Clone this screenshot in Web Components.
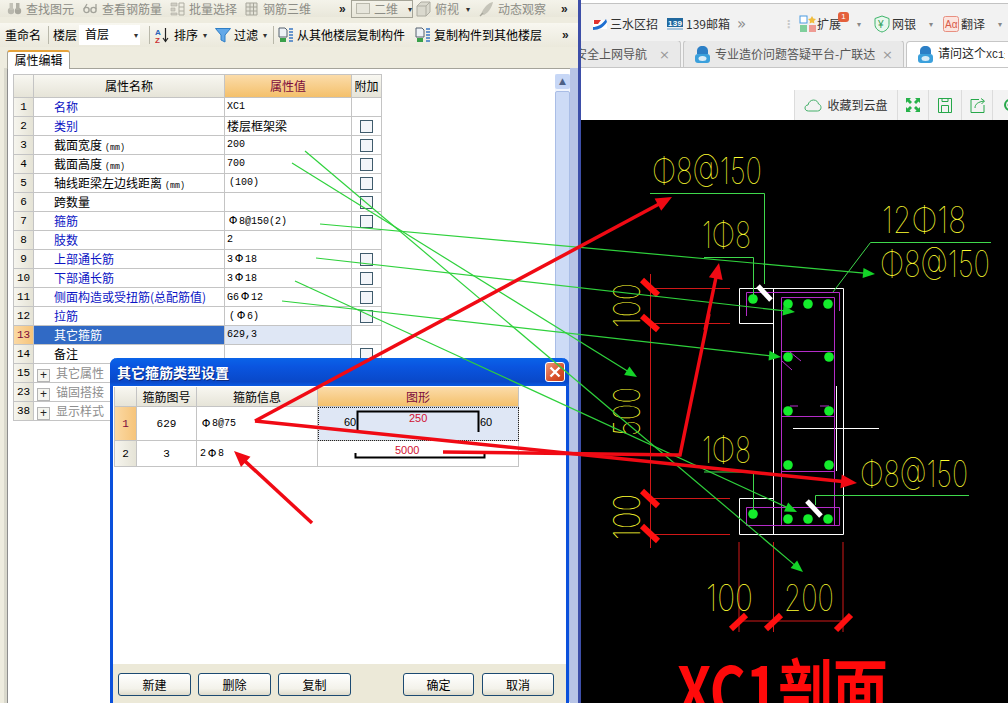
<!DOCTYPE html>
<html lang="zh">
<head>
<meta charset="utf-8">
<title>XC1</title>
<style>
html, body { margin: 0; padding: 0; width: 1008px; height: 703px; overflow: hidden; background: #fff; }
body { font: 12px/16px "Noto Sans CJK SC", "Liberation Sans", sans-serif; color: #000; }
</style>
</head>
<body>
<app-shell></app-shell>

<script>
const UI_FONT = '"Noto Sans CJK SC", "Liberation Sans", sans-serif';
const NUM_FONT = '"Liberation Mono", "Noto Sans CJK SC", monospace';

class AppShell extends HTMLElement {
    constructor() {
        super();
        this.attachShadow({ mode: "open" });
    }

    connectedCallback() {
        this.shadowRoot.innerHTML = `
        <style>
            :host { display: flex; position: relative; width: 1008px; height: 703px; overflow: hidden; }
            .divider { width: 3px; flex: none; background: #3d4ea8; }
            modeler-panel { flex: none; width: 578px; }
            browser-pane { flex: 1; min-width: 0; }
            markup-overlay { position: absolute; left: 0; top: 0; }
        </style>
        <modeler-panel></modeler-panel>
        <div class="divider"></div>
        <browser-pane></browser-pane>
        <markup-overlay></markup-overlay>
        `;
    }
}

/* left side: the rebar program */
class ModelerPanel extends HTMLElement {
    constructor() {
        super();
        this.attachShadow({ mode: "open" });
    }

    connectedCallback() {
        this.shadowRoot.innerHTML = `
        <style>
            :host { display: flex; flex-direction: column; position: relative; height: 703px; background: #eeecdf; overflow: hidden; font: 12px/16px ${UI_FONT}; }
            .bar { display: flex; align-items: center; flex: none; white-space: nowrap; }
            .top { height: 17px; background: linear-gradient(#f4f3ea, #e9e7da); color: #8d8d86; }
            .second { height: 24px; margin-top: 6px; background: linear-gradient(#f8f7f0, #ebe9dc); }
            .sep { width: 1px; height: 18px; background: #b9b8aa; flex: none; }
            .more { font: bold 12px/10px "Liberation Sans", sans-serif; color: #222; flex: none; width: 8px; }
            svg { flex: none; display: block; }
            .view { display: flex; align-items: center; width: 62px; height: 18px; box-sizing: border-box; border: 1px solid #a5a497; padding-left: 4px; gap: 4px; flex: none; }
            .select { width: 61px; height: 20px; background: #fff; padding-left: 6px; box-sizing: border-box; line-height: 18px; flex: none; position: relative; }
            .caret { font-size: 8px; color: #333; width: 8px; flex: none; text-align: center; }
            .tabs { flex: none; height: 18px; display: flex; margin: 3px 0 0 7px; }
            .tab { width: 63px; height: 19px; box-sizing: border-box; background: #fff; border: 1px solid #a4a39a; border-top: 2px solid #e6a33b; border-bottom: none; border-radius: 3px 3px 0 0; text-align: center; line-height: 16px; position: relative; z-index: 1; }
            .pane { flex: 1; display: flex; margin: 0 0 0 7px; background: #fff; border-top: 1px solid #a4a39a; border-left: 1px solid #8d8d8d; box-shadow: -3px 0 0 #d9d8cc; padding: 5px 0 0 5px; min-height: 0; }
            prop-grid { flex: none; }
            .scroll { margin-left: auto; width: 15px; display: flex; flex-direction: column; gap: 2px; background: #f1f5fd; }
            .scroll i { display: block; height: 15px; border-radius: 2px; background: #c7d7f6; color: #4d6185; font: 9px/15px "DejaVu Sans", sans-serif; text-align: center; font-style: normal; }
            .scroll b { display: block; flex: 1; background: #cddbf6; border: 1px solid #a9bde6; border-radius: 2px; box-sizing: border-box; }
            .edge { width: 8px; margin-top: -6px; background: #b8c4e6; flex: none; }
            stirrup-dialog { position: absolute; left: 110px; top: 358px; }
        </style>

        <div class="bar top">
            <tool-item icon="find" style="margin-left:7px">查找图元</tool-item>
            <tool-item icon="glasses" style="margin-left:9px">查看钢筋量</tool-item>
            <tool-item icon="batch" style="margin-left:8px">批量选择</tool-item>
            <tool-item icon="cube3" style="margin-left:7px">钢筋三维</tool-item>
            <span class="more" style="margin:0 4px 0 28px">»</span>
            <span class="view" style="margin-left:0"><svg width="14" height="11"><rect x=".5" y=".5" width="13" height="10" fill="#e7e6dc" stroke="#bab9ad"/></svg>二维<span class="caret" style="margin-left:4px">▾</span></span>
            <tool-item icon="box" style="margin-left:3px">俯视</tool-item>
            <span class="caret" style="margin:0 7px 0 5px">▾</span>
            <tool-item icon="orbit">动态观察</tool-item>
            <span class="more" style="margin-left:15px">»</span>
        </div>

        <div class="bar second">
            <span style="margin-left:5px;width:43px">重命名</span>
            <div class="sep"></div>
            <span style="margin-left:4px;width:26px">楼层</span>
            <span class="select">首层<span class="caret" style="position:absolute;right:0;top:1px">▾</span></span>
            <div class="sep" style="margin-left:9px"></div>
            <tool-item icon="sort" style="margin-left:5px">排序</tool-item>
            <span class="caret" style="margin:0 6px 0 3px">▾</span>
            <tool-item icon="funnel">过滤</tool-item>
            <span class="caret" style="margin:0 4px 0 3px">▾</span>
            <div class="sep"></div>
            <tool-item icon="copy" style="margin-left:4px">从其他楼层复制构件</tool-item>
            <tool-item icon="copy" style="margin-left:10px">复制构件到其他楼层</tool-item>
            <span class="more" style="margin-left:auto;margin-right:8px">»</span>
        </div>

        <div class="tabs"><div class="tab">属性编辑</div></div>
        <div class="pane">
            <prop-grid></prop-grid>
            <div class="scroll"><i>▲</i><b></b></div>
            <div class="edge"></div>
        </div>
        <stirrup-dialog></stirrup-dialog>
        `;
    }
}

class ToolItem extends HTMLElement {
    constructor() {
        super();
        this.attachShadow({ mode: "open" });
    }

    static ICONS = {
        find: `<circle cx="4" cy="10" r="3.2" fill="#b9b8ae"/><circle cx="11" cy="10" r="3.2" fill="#a8a79d"/><rect x="2.5" y="2" width="3.5" height="7" fill="#c4c3b8"/><rect x="9" y="2" width="3.5" height="7" fill="#b2b1a6"/>`,
        glasses: `<circle cx="3.5" cy="9" r="2.6" fill="none" stroke="#a3a39a" stroke-width="1.4"/><circle cx="10.5" cy="9" r="2.6" fill="none" stroke="#a3a39a" stroke-width="1.4"/><path d="M1 8 4 3M13 8V3" stroke="#a3a39a" stroke-width="1.3" fill="none"/>`,
        batch: `<path d="M1 2h6v3H1zM1 7h4v3H1zM1 12h6v2H1z" fill="#cfcec3" stroke="#aeada2" stroke-width=".6"/><path d="M9 2h5M9 6h5M9 10h5M9 14h5M9 2v12M14 2v12" stroke="#aeada2" fill="none"/>`,
        cube3: `<path d="M2 2h11v12H2zM2 6h11M2 10h11M6 2v12M9.5 2v12" stroke="#a7a69b" fill="#e4e3d8"/>`,
        box: `<path d="M1 5 5 1h9v10l-4 4H1zM1 5h9v10M10 5l4-4" fill="#dad9ce" stroke="#aeada2"/>`,
        orbit: `<path d="M2 13C5 6 9 2 14 1c-1 5-4 10-9 13z" fill="#c5c4b9"/><path d="M1 15 4 12" stroke="#a7a69b" stroke-width="1.5"/>`,
        sort: `<text x="0" y="7.5" font-family="Liberation Sans" font-size="8" font-weight="bold" fill="#2b62b8">A</text><text x="0" y="15.5" font-family="Liberation Sans" font-size="8" font-weight="bold" fill="#c33">Z</text><path d="M10.5 1v13M8 11l2.5 3.5L13 11" stroke="#222" fill="none" stroke-width="1.2"/>`,
        funnel: `<path d="M.5 1.5h15L10 8v7l-4-2V8z" fill="#62a8e8" stroke="#2f7fc6"/>`,
        copy: `<path d="M1 1h6l2 2v7H1z" fill="#eef2f6" stroke="#55606e"/><path d="M2 11h6v4H2z" fill="#39a04a"/><path d="M11 2h4M11 5h4M11 8h4M11 11h4M11 14h4" stroke="#3b78c4" stroke-width="1.6"/>`,
    };

    connectedCallback() {
        const icon = ToolItem.ICONS[this.getAttribute("icon")] || "";
        this.shadowRoot.innerHTML = `
        <style>
            :host { display: inline-flex; align-items: center; gap: 3px; flex: none; }
            svg { display: block; flex: none; }
        </style>
        <svg width="16" height="16" viewBox="0 0 16 16">${icon}</svg><slot></slot>
        `;
    }
}

// rebar symbol keeps a full cell width in the narrow value font
const rebar = (s) => s.replace(/Φ/g, '<span class="phi">Φ</span>');

class PropGrid extends HTMLElement {
    constructor() {
        super();
        this.attachShadow({ mode: "open" });
    }

    get rows() {
        return [
            ["1", "名称", "XC1", "link", false],
            ["2", "类别", "楼层框架梁", "link", true],
            ["3", "截面宽度<small>(mm)</small>", "200", "", true],
            ["4", "截面高度<small>(mm)</small>", "700", "", true],
            ["5", "轴线距梁左边线距离<small>(mm)</small>", "(100)", "", true],
            ["6", "跨数量", "", "", true],
            ["7", "箍筋", "Φ8@150(2)", "link", true],
            ["8", "肢数", "2", "link", false],
            ["9", "上部通长筋", "3Φ18", "link", true],
            ["10", "下部通长筋", "3Φ18", "link", true],
            ["11", "侧面构造或受扭筋(总配筋值)", "G6Φ12", "link", true],
            ["12", "拉筋", "(Φ6)", "link", true],
            ["13", "其它箍筋", "629,3", "sel", false],
            ["14", "备注", "", "", true],
            ["15", "其它属性", null, "group", false],
            ["23", "锚固搭接", null, "group", false],
            ["38", "显示样式", null, "group", false],
        ];
    }

    connectedCallback() {
        const cells = this.rows.map(([n, name, value, kind, check]) => {
            const idxClass = kind === "sel" ? "idx on" : "idx";
            const plus = kind === "group" ? `<span class="plus">+</span>` : "";
            let third = "";
            if (value !== null) {
                let cls = kind === "sel" ? "val selval" : "val";
                if (/[\u4e00-\u9fff]/.test(value)) cls += " cjk";
                if (value[0] === "(") cls += " pad";
                third = `<div class="${cls}">${rebar(value)}</div>
                <div class="add">${check ? `<span class="box"></span>` : ""}</div>`;
            }
            return `<div class="${idxClass}">${n}</div>
                <div class="name ${kind}" ${value === null ? 'style="grid-column: 2 / 5"' : ""}>${plus}${name}</div>${third}`;
        }).join("");

        this.shadowRoot.innerHTML = `
        <style>
            :host { display: block; width: 369px; font: 12px/18px ${UI_FONT}; }
            .grid { display: grid; grid-template-columns: 20px 191px 127px 30px; grid-template-rows: 23px repeat(17, 19px); border-top: 1px solid #c4c4c4; border-left: 1px solid #c4c4c4; }
            .grid > div { border-right: 1px solid #c4c4c4; border-bottom: 1px solid #c4c4c4; box-sizing: border-box; white-space: nowrap; overflow: hidden; }
            .head { background: linear-gradient(#f8f7f1, #e6e4d8); text-align: center; line-height: 22px; }
            .head.val-h { background: linear-gradient(#fbdcaa, #f4c06b); color: #7c0b3c; }
            .idx { background: linear-gradient(90deg, #f6f5ee, #e5e3d6); text-align: center; font: 11px/18px ${NUM_FONT}; }
            .idx.on { background: linear-gradient(90deg, #fbd9a4, #f6c47a); color: #7c0b3c; }
            .name { padding-left: 20px; }
            .name small { font: 8.3px/18px ${NUM_FONT}; margin-left: 3px; }
            .name.link { color: #0b14c4; }
            .name.sel { background: #316ac5; color: #fff; }
            .name.group { color: #8d8d8d; padding-left: 3px; }
            .plus { display: inline-block; width: 11px; height: 11px; margin-right: 6px; border: 1px solid #b4b4b4; background: #f5f5f0; color: #222; font: 12px/10px "Liberation Sans", sans-serif; text-align: center; vertical-align: -1px; }
            .val { padding-left: 2px; font: 10px/18px ${NUM_FONT}; }
            .val.cjk { font: 12px/18px ${UI_FONT}; }
            .val.pad { padding-left: 4px; }
            .phi { display: inline-block; width: 12px; text-align: center; font: 11px/18px "DejaVu Sans", sans-serif; }
            .selval { background: #dfe7f5; }
            .add { display: flex; align-items: center; justify-content: center; }
            .box { width: 11px; height: 11px; border: 1px solid #3f5b6c; background: #f3f5f9; display: block; }
        </style>
        <div class="grid">
            <div class="head"></div>
            <div class="head">属性名称</div>
            <div class="head val-h">属性值</div>
            <div class="head">附加</div>
            ${cells}
        </div>
        `;
    }
}

class StirrupDialog extends HTMLElement {
    constructor() {
        super();
        this.attachShadow({ mode: "open" });
    }

    connectedCallback() {
        this.shadowRoot.innerHTML = `
        <style>
            :host { display: flex; flex-direction: column; width: 459px; height: 350px; box-sizing: border-box; border: 3px solid #0a50dc; border-top: none; border-radius: 7px 7px 0 0; background: #fff; font: 12px/16px ${UI_FONT}; }
            .title { flex: none; height: 28px; margin: 0 -3px; padding: 0 4px 0 7px; border-radius: 7px 7px 0 0; display: flex; align-items: center; justify-content: space-between; background: linear-gradient(#0a63e8, #0a55e0 30%, #0948c8 85%, #0a5ae2); color: #fff; font: bold 14px/16px ${UI_FONT}; text-shadow: 1px 1px 0 #0a2a80; }
            .close { width: 20px; height: 20px; box-sizing: border-box; border: 1px solid #fff; border-radius: 3px; background: linear-gradient(135deg, #ee9a7c, #d9502a 60%, #c23d18); }
            .close svg { display: block; }
            .table { flex: none; margin: 1px 0 0 1px; display: grid; grid-template-columns: 22px 60px 121px 201px; grid-template-rows: 20px 34px 26px; width: 405px; border-left: 1px solid #c4c4c4; }
            .table > div { border-right: 1px solid #c4c4c4; border-bottom: 1px solid #c4c4c4; box-sizing: border-box; display: flex; align-items: center; justify-content: center; overflow: hidden; }
            .h { background: linear-gradient(#f8f7f1, #e6e4d8); }
            .h.f { background: linear-gradient(#fbdcaa, #f4c06b); color: #7c0b3c; }
            .i { background: linear-gradient(90deg, #f6f5ee, #e5e3d6); font: 11px ${NUM_FONT}; }
            .i.on { background: linear-gradient(90deg, #fbd9a4, #f6c47a); color: #7c0b3c; }
            .n { font: 11px ${NUM_FONT}; }
            .table > .t { justify-content: flex-start; padding-left: 3px; font: 10px ${NUM_FONT}; white-space: pre; }
            .phi { display: inline-block; width: 12px; text-align: center; font: 11px "DejaVu Sans", sans-serif; }
            .table > .shape { background: #dfe7f5; outline: 1px dotted #222; outline-offset: -1px; }
            svg { display: block; }
            .spacer { flex: 1; }
            .foot { flex: none; height: 41px; background: #ece9d8; display: flex; gap: 7px; padding: 9px 0 0 5px; box-sizing: border-box; }
            .foot dlg-button:nth-child(3) { margin-right: 45px; }
            .foot dlg-button:nth-child(4) { width: 71px; margin-right: 1px; }
            .foot dlg-button:nth-child(5) { width: 72px; }
        </style>
        <div class="title"><span>其它箍筋类型设置</span>
            <span class="close"><svg width="18" height="18"><path d="M4.5 4.5 13.5 13.5M13.5 4.5 4.5 13.5" stroke="#fff" stroke-width="2.4" fill="none"/></svg></span>
        </div>
        <div class="table">
            <div class="h"></div><div class="h">箍筋图号</div><div class="h">箍筋信息</div><div class="h f">图形</div>
            <div class="i on">1</div><div class="n">629</div><div class="t">${rebar("Φ8@75")}</div>
            <div class="shape">
                <svg width="200" height="32" viewBox="0 0 200 32" font-family="Liberation Sans" font-size="11">
                    <path d="M39.5 23V3.5H160.5V24" fill="none" stroke="#000" stroke-width="2"/>
                    <text x="26" y="18" fill="#000">60</text>
                    <text x="162" y="18" fill="#000">60</text>
                    <text x="91" y="14" fill="#d01030">250</text>
                </svg>
            </div>
            <div class="i">2</div><div class="n">3</div><div class="t">${rebar("2Φ8")}</div>
            <div>
                <svg width="200" height="24" viewBox="0 0 200 24" font-family="Liberation Sans" font-size="11">
                    <path d="M37.5 11V15.5H166.5V11" fill="none" stroke="#000" stroke-width="2"/>
                    <text x="77" y="12" fill="#d01030">5000</text>
                </svg>
            </div>
        </div>
        <div class="spacer"></div>
        <div class="foot">
            <dlg-button>新建</dlg-button>
            <dlg-button>删除</dlg-button>
            <dlg-button>复制</dlg-button>
            <dlg-button>确定</dlg-button>
            <dlg-button>取消</dlg-button>
        </div>
        `;
    }
}

class DlgButton extends HTMLElement {
    constructor() {
        super();
        this.attachShadow({ mode: "open" });
    }

    connectedCallback() {
        this.shadowRoot.innerHTML = `
        <style>
            :host { display: flex; align-items: center; justify-content: center; width: 73px; height: 23px; box-sizing: border-box; border: 1px solid #1c4a72; border-radius: 3px; background: linear-gradient(#fff, #f3f2ea 70%, #dedbcc); font-size: 12px; flex: none; }
        </style>
        <slot></slot>
        `;
    }
}

/* right side: browser window showing the forum image */
class BrowserPane extends HTMLElement {
    constructor() {
        super();
        this.attachShadow({ mode: "open" });
    }

    connectedCallback() {
        this.shadowRoot.innerHTML = `
        <style>
            :host { display: flex; flex-direction: column; height: 703px; background: #fff; overflow: hidden; font: 12px/16px ${UI_FONT}; color: #333; white-space: nowrap; }
            .tools { flex: none; height: 38px; margin-top: 3px; padding-top: 3px; border-top: 1px solid #c3c3c3; background: #f2f2f2; display: flex; align-items: center; box-sizing: border-box; padding-left: 11px; }
            .tools svg { display: block; flex: none; }
            .tools span { display: flex; align-items: center; flex: none; }
            .tools .arr { color: #888; font-size: 8px; font-style: normal; margin-left: 11px; }
            .badge { position: relative; }
            .badge b { position: absolute; left: 39px; top: -3px; width: 11px; height: 10px; border-radius: 3px; background: #e4603c; color: #fff; font: 8px/10px "Liberation Sans", sans-serif; text-align: center; }
            .tabs { flex: none; height: 27px; display: flex; align-items: flex-end; background: #f2f2f2; border-bottom: 1px solid #c6c6c6; box-sizing: border-box; gap: 2px; overflow: hidden; }
            .tabs tt { font: 10px/16px ${NUM_FONT}; }
            .spacer { flex: none; height: 22px; }
            .actions { flex: none; align-self: flex-end; display: flex; height: 30px; background: #f3f3f3; }
            .actions > div { display: flex; align-items: center; justify-content: center; border-left: 1px solid #dcdcdc; height: 30px; gap: 5px; box-sizing: border-box; flex: none; }
            cad-drawing { flex: 1; min-height: 0; }
        </style>
        <div class="tools">
            <span style="gap:2px;width:75px"><svg width="16" height="14"><path d="M1 3h14v9H1z" fill="#fff"/><path d="M1 10C5 10 10 8 14 2l1 3c-3 5-8 8-14 8z" fill="#1f6fd1"/><path d="M2 3h7L6 7H2z" fill="#e0322f"/></svg>三水区招</span>
            <span style="gap:3px;width:70px"><svg width="16" height="14"><rect x="0" y="1" width="16" height="9" fill="#20689e"/><rect x="0" y="11" width="16" height="2" fill="#a7c4dc"/><text x="1" y="9" font-size="8" font-weight="bold" fill="#fff" font-family="Liberation Sans" textLength="14">139</text></svg>139邮箱</span>
            <span style="width:46px;color:#8b8b8b;font:15px 'DejaVu Sans',sans-serif">»</span>
            <span style="width:16px;color:#c8c8c8;font:bold 11px/5px 'DejaVu Sans',sans-serif">⋮</span>
            <span class="badge" style="gap:0;width:75px"><svg width="18" height="18"><rect x="1" y="1" width="7" height="7" fill="#fff" stroke="#4a9ae0"/><path d="M13 1l1.4 2.4L17 4l-2 2 .4 2.6L13 7.4 10.6 8.600 11 6 9 4l2.600-.6z" fill="#f1bd3d"/><rect x="1" y="10" width="7" height="7" fill="#7fcf9c"/><rect x="10" y="10" width="7" height="7" fill="#ee9b93"/></svg>扩展<b>1</b><i class="arr" style="margin-left:16px">▾</i></span>
            <span style="gap:2px;width:69px"><svg width="16" height="18"><path d="M8 1l7 2.500v6C15 13 12 16 8 17 4 16 1 13 1 9.500v-6z" fill="#e9f7ee" stroke="#3fb56b"/><text x="4" y="13" font-size="10" fill="#2c9e57" font-family="Liberation Sans">¥</text></svg>网银<i class="arr">▾</i></span>
            <span style="gap:2px"><svg width="16" height="16"><rect x=".5" y=".5" width="15" height="15" rx="2" fill="#fbe4df" stroke="#e88f80"/><text x="2" y="12" font-size="10" fill="#d85a48" font-family="Liberation Sans">Aα</text></svg>翻译<i class="arr">▾</i></span>
        </div>
        <div class="tabs">
            <browser-tab width="118" style="margin-left:-18px">安全上网导航</browser-tab>
            <browser-tab width="221" icon>专业造价问题答疑平台-广联达</browser-tab>
            <browser-tab width="110" icon active>请问这个<tt>XC1</tt>是</browser-tab>
        </div>
        <div class="spacer"></div>
        <div class="actions">
            <div style="width:103px"><svg width="18" height="13"><path d="M4.500 12C2 12 1 10.500 1 9c0-2 1.500-3 3-3 .5-3 3-5 5.500-5 3 0 4.500 2 5 4 1.500.3 2.500 2 2.500 3.500 0 2-1.500 3.500-3.500 3.500z" fill="none" stroke="#45b06a"/></svg>收藏到云盘</div>
            <div style="width:31px"><svg width="14" height="14" fill="#27b24a"><path d="M0 0h5L3.500 1.500 6 4 4 6 1.500 3.500 0 5zM14 0v5L12.500 3.500 10 6 8 4 10.500 1.500 9 0zM0 14V9l1.500 1.500L4 8l2 2-2.500 2.500L5 14zM14 14H9l1.500-1.500L8 10l2-2 2.500 2.500L14 9z"/></svg></div>
            <div style="width:33px"><svg width="14" height="15" fill="none" stroke="#27a84a"><path d="M.5.5h13v14H.5zM3.500 7.500h7v7h-7zM4 .5h6v3H4z"/></svg></div>
            <div style="width:31px"><svg width="15" height="15" fill="none" stroke="#27a84a"><path d="M9 1.500H1v13h13V7M5 10c0-4 3-6 9-7M11 .5 14.500 3 11.500 6"/></svg></div>
            <div style="width:16px;justify-content:flex-start;padding-left:9px;overflow:hidden"><svg width="16" height="16" fill="none" stroke="#27a84a" stroke-width="2"><circle cx="8" cy="8" r="5"/><circle cx="8" cy="8" r="2" stroke-width="1"/></svg></div>
        </div>
        <cad-drawing></cad-drawing>
        `;
    }
}

class BrowserTab extends HTMLElement {
    constructor() {
        super();
        this.attachShadow({ mode: "open" });
    }

    connectedCallback() {
        const w = this.getAttribute("width");
        const icon = this.hasAttribute("icon") ? `
            <svg width="15" height="17" viewBox="0 0 15 17"><path d="M7.500 0C11 0 13 2 13 5v3H2V5c0-3 2-5 5.500-5z" fill="#2c7fc6"/><rect x="0" y="8" width="15" height="9" rx="3" fill="#3ba0dc"/><ellipse cx="7.500" cy="12.500" rx="4" ry="2.500" fill="#d8ecf8"/></svg>` : "";
        const active = this.hasAttribute("active");
        this.shadowRoot.innerHTML = `
        <style>
            :host { display: flex; flex: none; height: 27px; width: ${w}px; box-sizing: border-box; align-items: center; gap: 5px; padding: 0 10px 0 11px; position: relative;
                background: ${active ? "#fff" : "#e9e9e9"}; border: 1px solid #c6c6c6; border-bottom: ${active ? "1px solid #fff" : "none"}; border-radius: 4px 4px 0 0; color: ${active ? "#222" : "#555"}; ${active ? "margin-bottom:-1px;" : ""} }
            .label { flex: 1; overflow: hidden; white-space: nowrap; min-width: 0; }
            .x { flex: none; color: #999; font: 13px "DejaVu Sans", sans-serif; ${active ? "display:none;" : ""} }
            svg { flex: none; display: block; }
        </style>
        ${icon}<span class="label"><slot></slot></span><span class="x">×</span>
        `;
    }
}

/* free canvas: coordinates below are page pixels */
class CadDrawing extends HTMLElement {
    constructor() {
        super();
        this.attachShadow({ mode: "open" });
    }

    // CAD text is tall and narrow: a smaller font stretched upward
    cadText(str, x0, x1, base) {
        return `<text transform="translate(${x0} ${base}) scale(1 1.32)" font-size="28" textLength="${x1 - x0}" lengthAdjust="spacingAndGlyphs">${str}</text>`;
    }

    vertText(str, cx, y0, y1) {
        // rotated dimension text, reads bottom to top
        return `<text transform="translate(${cx} ${y1}) rotate(-90) scale(1 1.32)" font-size="28" textLength="${y1 - y0}" lengthAdjust="spacingAndGlyphs">${str}</text>`;
    }

    get dots() {
        return [[753, 299], [788, 304], [808, 304], [828, 304], [788, 357], [829, 357], [788, 411], [829, 411],
            [788, 465], [829, 465], [753, 514], [788, 519], [808, 519], [828, 519]];
    }

    connectedCallback() {
        const dots = this.dots.map(([x, y]) => `<circle cx="${x}" cy="${y}" r="4.800"/>`).join("");
        const redTicks = [[642, 280, 658, 295], [642, 316, 658, 330], [642, 491, 658, 506], [642, 526, 658, 541],
            [731, 629, 746, 615], [766, 629, 781, 615], [836, 630, 851, 615]]
            .map(([a, b, c, d]) => `<line x1="${a}" y1="${b}" x2="${c}" y2="${d}"/>`).join("");

        this.shadowRoot.innerHTML = `
        <style>
            :host { display: block; background: #000; overflow: hidden; }
            svg { display: block; }
            .yellow { fill: #ffff30; font-family: "Inter", "Liberation Sans", sans-serif; font-weight: 100; }
        </style>
        <svg width="427" height="583" viewBox="581 120 427 583">
            <g stroke="#d01818" fill="none">
                <path d="M650.500 274V548M651 288.500H730M651 323.500H730M651 498.500H730M651 534.500H730"/>
                <path d="M739 542V632M773.500 542V632M843 542V632M739 621H843"/>
            </g>
            <g stroke="#ff1010" stroke-width="6" fill="none">${redTicks}</g>

            <g stroke="#fff" fill="none">
                <path d="M739.500 288.500H843.500V534.500H739.500V498.500H773.500M739.500 288.500V323.500H773.500M773.500 288.500V534.500"/>
                <path d="M793 428.500H879M836.500 386V471"/>
            </g>
            <g stroke="#b42cc8" fill="none">
                <path d="M746.500 316V292.500H839.500V311"/>
                <path d="M781.500 297.500H834.500V525.500H781.500Z"/>
                <path d="M781.500 351.500H834.500M781.500 416.500H834.500M781.500 471.500H834.500"/>
                <path d="M746.500 507.500V525.500H839.500V507.500H746.500"/>
                <path d="M790 352 801 361M782 361 792 370M790 406 798 406M820 406 829 406"/>
            </g>
            <g fill="#14ec2c">${dots}</g>
            <g stroke="#fff" stroke-width="5" fill="none">
                <line x1="758" y1="286" x2="771" y2="300"/><line x1="807" y1="501" x2="821" y2="516"/>
            </g>
            <g stroke="#3fd84c" fill="none">
                <path d="M650 193.500H764.500V284"/>
                <path d="M704 257.500H753.500V295"/>
                <path d="M833 292 870.500 242.500H991"/>
                <path d="M704 472H753.500V510"/>
                <path d="M815.500 505V495.500H969"/>
            </g>

            <g class="yellow">
                ${this.cadText("Φ8@150", 652, 762, 184)}
                ${this.cadText("1Φ8", 702, 751, 248)}
                ${this.cadText("12Φ18", 882, 966, 233)}
                ${this.cadText("Φ8@150", 880, 990, 277)}
                ${this.cadText("1Φ8", 702, 751, 463)}
                ${this.cadText("Φ8@150", 860, 968, 487)}
                ${this.cadText("100", 706, 753, 611)}
                ${this.cadText("200", 784, 834, 611)}
                ${this.vertText("100", 640, 283, 328)}
                ${this.vertText("500", 640, 387, 436)}
                ${this.vertText("100", 640, 494, 540)}
            </g>
            <text x="677" y="716" font-size="68" font-weight="700" fill="#ff0a0a" font-family="'Noto Sans CJK SC', sans-serif" textLength="211" lengthAdjust="spacingAndGlyphs">XC1剖面</text>
        </svg>
        `;
    }
}

/* hand drawn arrows someone put over the whole screenshot */
class MarkupOverlay extends HTMLElement {
    constructor() {
        super();
        this.attachShadow({ mode: "open" });
    }

    head(x0, y0, x1, y1, len, half, fill) {
        const a = Math.atan2(y1 - y0, x1 - x0);
        const bx = x1 - Math.cos(a) * len;
        const by = y1 - Math.sin(a) * len;
        const dx = -Math.sin(a) * half;
        const dy = Math.cos(a) * half;
        const pts = [[x1, y1], [bx + dx, by + dy], [bx - dx, by - dy]].map((p) => p.map((v) => v.toFixed(1)).join(","));
        return `<polygon points="${pts.join(" ")}" fill="${fill}"/>`;
    }

    green(x0, y0, x1, y1) {
        const a = Math.atan2(y1 - y0, x1 - x0);
        const ex = x1 - Math.cos(a) * 8;
        const ey = y1 - Math.sin(a) * 8;
        return `<line x1="${x0}" y1="${y0}" x2="${ex}" y2="${ey}" stroke="#2fd13c" stroke-width="1.200"/>` + this.head(x0, y0, x1, y1, 12, 5, "#14d428");
    }

    red(x0, y0, x1, y1) {
        const a = Math.atan2(y1 - y0, x1 - x0);
        const ex = x1 - Math.cos(a) * 12;
        const ey = y1 - Math.sin(a) * 12;
        return `<line x1="${x0}" y1="${y0}" x2="${ex}" y2="${ey}" stroke="#f00a14" stroke-width="3.500"/>` + this.head(x0, y0, x1, y1, 16, 7, "#f00a14");
    }

    connectedCallback() {
        const lines = [
            this.green(305, 151, 803, 572),
            this.green(292, 163, 637, 377),
            this.green(320, 224, 875, 274),
            this.green(316, 258, 795, 312),
            this.green(282, 301, 781, 357),
            this.green(295, 281, 797, 512),
            this.red(255, 421, 672, 197),
            this.red(255, 421, 857, 483),
            `<polyline points="443,452 680,455 709,314" fill="none" stroke="#f00a14" stroke-width="3.500"/>`,
            this.red(705, 330, 719, 263),
            this.red(312, 523, 234, 451),
        ].join("");

        this.shadowRoot.innerHTML = `
        <style>
            :host { display: block; width: 1008px; height: 703px; pointer-events: none; }
            svg { display: block; }
        </style>
        <svg width="1008" height="703" viewBox="0 0 1008 703">${lines}</svg>
        `;
    }
}

customElements.define("tool-item", ToolItem);
customElements.define("prop-grid", PropGrid);
customElements.define("dlg-button", DlgButton);
customElements.define("stirrup-dialog", StirrupDialog);
customElements.define("modeler-panel", ModelerPanel);
customElements.define("browser-tab", BrowserTab);
customElements.define("cad-drawing", CadDrawing);
customElements.define("browser-pane", BrowserPane);
customElements.define("markup-overlay", MarkupOverlay);
customElements.define("app-shell", AppShell);
</script>
</body>
</html>
